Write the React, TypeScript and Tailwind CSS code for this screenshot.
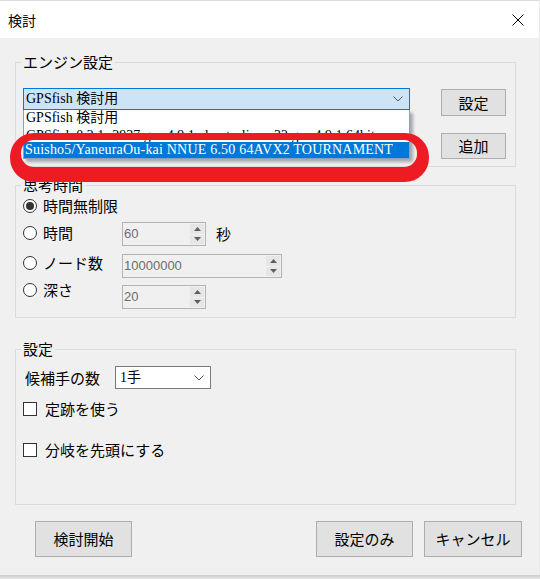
const serif = "font-['Liberation_Serif','Noto_Sans_CJK_JP',serif]";

function Btn({ className, children }: { className: string; children: React.ReactNode }) {
  return (
    <div
      className={`flex items-center justify-center border border-[#adadad] bg-[#e1e1e1] text-[15px] leading-[20px] ${className}`}
    >
      {children}
    </div>
  );
}

function Chevron({ color = "#555" }: { color?: string }) {
  return (
    <svg width="10" height="6" viewBox="0 0 10 6">
      <path d="M0.5 0.5 L5 5 L9.5 0.5" fill="none" stroke={color} strokeWidth="1" />
    </svg>
  );
}

function Radio({ checked, label, className = "" }: { checked?: boolean; label: string; className?: string }) {
  return (
    <div className={`flex h-[20px] items-center gap-[6px] ${className}`}>
      <span className="flex h-[14px] w-[14px] items-center justify-center rounded-full border border-[#333333] bg-white">
        {checked && <span className="h-[8px] w-[8px] rounded-full bg-[#333333]" />}
      </span>
      <span className="text-[15px] leading-[20px]">{label}</span>
    </div>
  );
}

function Check({ label, className = "" }: { label: string; className?: string }) {
  return (
    <div className={`flex h-[20px] items-center gap-[8px] ${className}`}>
      <span className="h-[14px] w-[14px] border border-[#333333] bg-white" />
      <span className="text-[15px] leading-[20px]">{label}</span>
    </div>
  );
}

function Arrow({ up }: { up?: boolean }) {
  return (
    <span className="flex flex-1 items-center justify-center bg-[#e6e6e6]">
      <svg width="7" height="4" viewBox="0 0 7 4">
        <path d={up ? "M0 4 L3.5 0 L7 4 Z" : "M0 0 L3.5 4 L7 0 Z"} fill="#606060" />
      </svg>
    </span>
  );
}

function Spin({ value, className }: { value: string; className: string }) {
  return (
    <div className={`flex h-[24px] border border-[#b4b4b4] bg-[#f0f0f0] ${className}`}>
      <span className="flex-1 pl-[1px] font-['Liberation_Sans',sans-serif] text-[13px] leading-[21px] text-[#6d6d6d]">
        {value}
      </span>
      <div className="flex w-[15px] flex-col gap-[1px] py-[1px] pr-[1px]">
        <Arrow up />
        <Arrow />
      </div>
    </div>
  );
}

export default function App() {
  return (
    <div className="relative h-[579px] w-[540px] overflow-hidden bg-[#e8e8e8] font-['Noto_Sans_CJK_JP','Noto_Sans',sans-serif] text-black">
      <div className="flex h-[575px] w-[539px] flex-col bg-[#f0f0f0]">
        {/* title bar */}
        <div className="flex h-[38px] items-center justify-between border-t border-[#dcdcdc] bg-white pl-[8px] pr-[15px]">
          <span className="text-[14px] leading-[20px]">検討</span>
          <svg width="12" height="12" viewBox="0 0 12 12">
            <path d="M0.5 0.5 L11.5 11.5 M11.5 0.5 L0.5 11.5" stroke="#000" strokeWidth="1" />
          </svg>
        </div>

        <div className="flex flex-col pl-[15px] pt-[15px]">
          {/* エンジン設定 */}
          <fieldset className="h-[114px] w-[501px] border border-[#dcdcdc] pl-[7px] pr-[8px]">
            <legend className="-ml-[2px] px-[2px] text-[15px] leading-[18px]">エンジン設定</legend>
            <div className="mt-[17px] flex">
              <div className="relative flex h-[22px] w-[387px] items-center justify-between border border-[#0078d7] bg-[#cce4f7] pl-[2px] pr-[6px]">
                <span className={`${serif} text-[14px] leading-[20px]`}>GPSfish 検討用</span>
                <Chevron />
                <div className={`absolute left-[-1px] top-[21px] flex w-[387px] flex-col border-x border-b border-[#8aa2c2] bg-white shadow-[3px_3px_3px_rgba(0,0,0,0.3)] ${serif} text-[14px]`}>
                  <span className="h-[16px] pl-[2px] leading-[16px]">GPSfish 検討用</span>
                  <span className="h-[16px] overflow-hidden whitespace-nowrap pl-[2px] pt-[2px] leading-[16px]">
                    GPSfish 0.2.1 r2937 gcc 4.9.1 ubuntu-linux 32 gcc 4.9.1 64bit
                  </span>
                  <span className="h-[16px] bg-[#0078d7] pl-[1px] leading-[16px] tracking-[0.2px] text-white">
                    Suisho5/YaneuraOu-kai NNUE 6.50 64AVX2 TOURNAMENT
                  </span>
                </div>
              </div>
              <div className="ml-[31px] mt-[1px] flex flex-col gap-[17px]">
                <Btn className="h-[27px] w-[65px]">設定</Btn>
                <Btn className="h-[26px] w-[65px]">追加</Btn>
              </div>
            </div>
          </fieldset>

          {/* 思考時間 */}
          <fieldset className="mt-[9px] h-[142px] w-[501px] border border-[#dcdcdc] pl-[7px] pr-[8px]">
            <legend className="-ml-[2px] px-[2px] text-[15px] leading-[18px]">思考時間</legend>
            <div className="flex">
              <div className="flex w-[99px] flex-col pt-[2px]">
                <Radio checked label="時間無制限" />
                <Radio label="時間" className="mt-[7px]" />
                <Radio label="ノード数" className="mt-[10px]" />
                <Radio label="深さ" className="mt-[7px]" />
              </div>
              <div className="flex flex-col pt-[28px]">
                <div className="flex items-center">
                  <Spin value="60" className="w-[84px]" />
                  <span className="ml-[10px] text-[15px] leading-[20px]">秒</span>
                </div>
                <Spin value="10000000" className="mt-[8px] w-[160px]" />
                <Spin value="20" className="mt-[7px] w-[84px]" />
              </div>
            </div>
          </fieldset>

          {/* 設定 */}
          <fieldset className="mt-[22px] h-[165px] w-[501px] border border-[#dcdcdc] pl-[7px] pr-[8px]">
            <legend className="-ml-[2px] px-[2px] text-[15px] leading-[18px]">設定</legend>
            <div className="ml-[2px] mt-[8px] flex items-center">
              <span className="w-[90px] text-[15px] leading-[20px]">候補手の数</span>
              <div className="flex h-[23px] w-[96px] items-center justify-between border border-[#7a7a7a] bg-white pl-[4px] pr-[6px]">
                <span className={`${serif} text-[14px] leading-[20px]`}>1手</span>
                <Chevron />
              </div>
            </div>
            <Check label="定跡を使う" className="mt-[10px]" />
            <Check label="分岐を先頭にする" className="mt-[21px]" />
          </fieldset>

          <div className="ml-[20px] mt-[16px] flex">
            <Btn className="h-[36px] w-[97px]">検討開始</Btn>
            <Btn className="ml-[184px] h-[36px] w-[97px]">設定のみ</Btn>
            <Btn className="ml-[11px] h-[36px] w-[98px]">キャンセル</Btn>
          </div>
        </div>
      </div>
      <div className="h-[4px] w-[540px] bg-gradient-to-b from-[#cccccc] to-[#e8e8e8]" />

      {/* red highlight drawn over the screenshot */}
      <svg className="pointer-events-none absolute left-0 top-0" width="540" height="579" viewBox="0 0 540 579">
        <path
          fillRule="evenodd"
          fill="#ed1c24"
          d="M34 133 H405 A24 24 0 0 1 429 157 V158 A24 24 0 0 1 405 182 H34 A24 24 0 0 1 10 158 V157 A24 24 0 0 1 34 133 Z M34 140 H404 A13 13 0 0 1 417 153 V154 A13 13 0 0 1 404 167 H34 A13 13 0 0 1 21 154 V153 A13 13 0 0 1 34 140 Z"
        />
      </svg>
    </div>
  );
}
